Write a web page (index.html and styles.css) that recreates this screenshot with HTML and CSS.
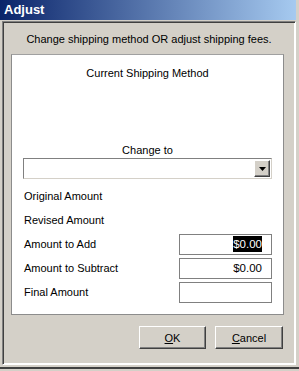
FILE: index.html
```html
<!DOCTYPE html>
<html lang="en">

<head>
    <meta charset="utf-8">
    <title>Adjust</title>
    <link rel="stylesheet" href="styles.css">
</head>

<body>
    <div class="window">
        <div class="titlebar">Adjust</div>

        <div class="client">
            <p class="intro">Change shipping method OR adjust shipping fees.</p>

            <div class="panel">
                <div class="caption current">Current Shipping Method</div>
                <div class="caption change">Change to</div>

                <div class="select">
                    <span class="select-value"></span>
                    <span class="select-btn">
                        <svg width="7" height="4" viewBox="0 0 7 4"><path d="M0 0h7L3.5 4z" fill="#000"/></svg>
                    </span>
                </div>

                <div class="rows">
                    <div class="row"><span class="label">Original Amount</span></div>
                    <div class="row"><span class="label">Revised Amount</span></div>
                    <div class="row">
                        <span class="label">Amount to Add</span>
                        <span class="field"><span class="selected">$0.00</span></span>
                    </div>
                    <div class="row">
                        <span class="label">Amount to Subtract</span>
                        <span class="field">$0.00</span>
                    </div>
                    <div class="row">
                        <span class="label">Final Amount</span>
                        <span class="field"></span>
                    </div>
                </div>
            </div>

            <div class="buttons">
                <button class="btn"><u>O</u>K</button>
                <button class="btn"><u>C</u>ancel</button>
            </div>
        </div>
    </div>
</body>

</html>
```

FILE: styles.css
```css
html,
body {
    margin: 0;
    padding: 0;
    background: #d4d0c8;
}

body {
    font-family: "Liberation Sans", Arial, sans-serif;
    font-size: 11px;
    color: #000;
}

.window {
    width: 299px;
    height: 369px;
    box-sizing: border-box;
    border-bottom: 2px solid #404040;
    background: #d4d0c8;
}

.titlebar {
    height: 20px;
    margin-right: 3px;
    padding-left: 4px;
    background: linear-gradient(to right, #0a246a, #a6caf0);
    color: #fff;
    font-size: 13px;
    font-weight: bold;
    line-height: 20px;
}

.client {
    margin: 1px 3px 0 2px;
    height: 344px;
    box-sizing: border-box;
    border: 1px solid;
    border-color: #808080 #fff #fff #808080;
    box-shadow: inset 1px 1px #404040, inset -1px -1px #ffffff;
    padding: 1px;
}

.intro {
    margin: 9px 0 0;
    text-align: center;
    line-height: 14px;
}

.panel {
    margin: 8px 10px 0 7px;
    height: 261px;
    box-sizing: border-box;
    background: #fff;
    border: 1px solid #8c8c8c;
    border-top-color: #a0a0a0;
}

.caption {
    text-align: center;
    line-height: 14px;
}

.current {
    margin-top: 11px;
}

.change {
    margin-top: 63px;
}

.select {
    display: flex;
    margin: 1px 0 0 11px;
    width: 249px;
    height: 21px;
    box-sizing: border-box;
    border: 1px solid #808080;
    border-right-color: #d4d0c8;
    border-bottom-color: #d4d0c8;
    padding: 1px;
}

.select-value {
    flex: 1;
}

.select-btn {
    display: flex;
    align-items: center;
    justify-content: center;
    width: 16px;
    box-sizing: border-box;
    background: #d4d0c8;
    border: 1px solid;
    border-color: #fff #404040 #404040 #fff;
    box-shadow: inset -1px -1px #808080;
}

.rows {
    margin-top: 5px;
}

.row {
    display: flex;
    align-items: center;
    justify-content: space-between;
    height: 24px;
    padding: 0 11px 0 12px;
}

.field {
    display: flex;
    align-items: center;
    justify-content: flex-end;
    width: 93px;
    height: 21px;
    box-sizing: border-box;
    border: 1px solid #808080;
    padding-right: 9px;
    font-size: 11.5px;
}

.selected {
    background: #000;
    color: #fff;
    line-height: 16px;
}

.buttons {
    display: flex;
    justify-content: flex-end;
    gap: 9px;
    margin: 11px 11px 0 0;
}

.btn {
    width: 67px;
    height: 23px;
    padding: 0;
    font-family: inherit;
    font-size: 11px;
    color: #000;
    background: #d4d0c8;
    border: 1px solid;
    border-color: #fff #404040 #404040 #fff;
    box-shadow: inset -1px -1px #808080;
}

.btn + .btn {
    width: 68px;
}
```
